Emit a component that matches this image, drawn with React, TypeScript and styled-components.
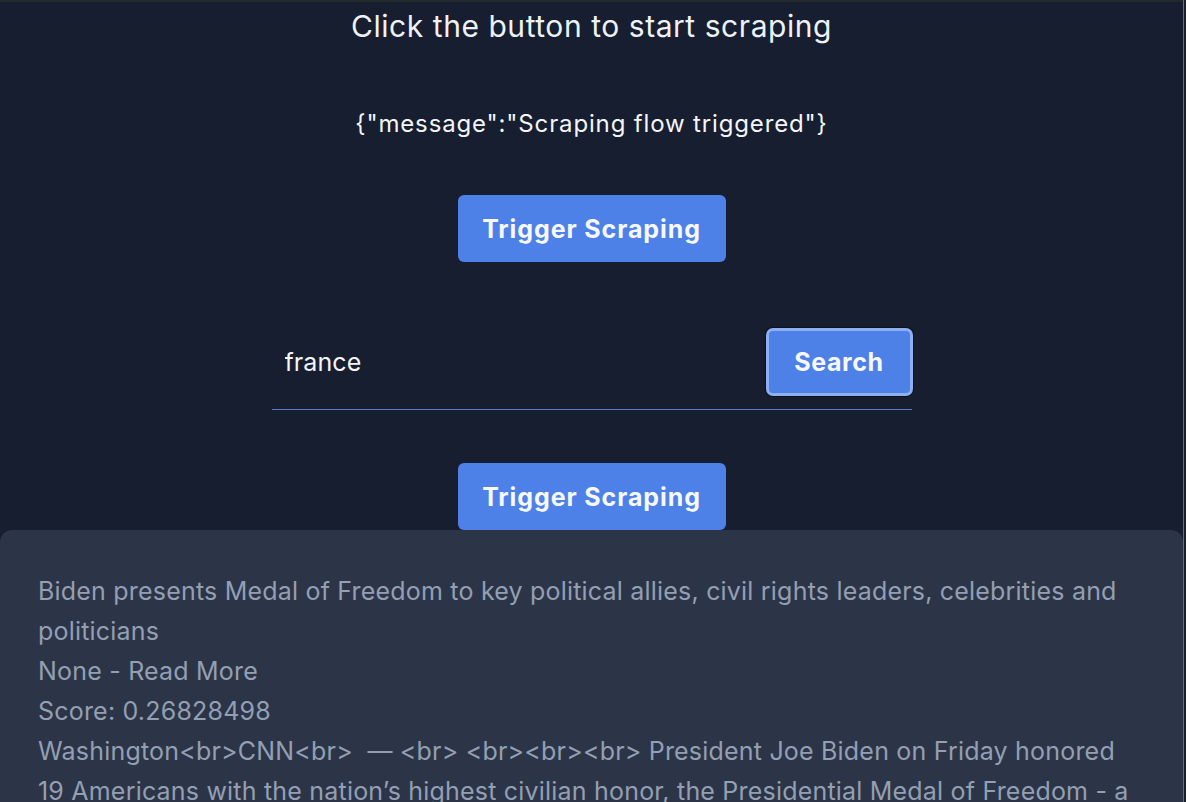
import { useState } from "react";
import styled, { createGlobalStyle } from "styled-components";

const GlobalStyle = createGlobalStyle`
  html, body {
    margin: 0;
    padding: 0;
    background: #161e2f;
    overflow: hidden;
  }
  body {
    font-family: Inter, "Noto Sans", "Liberation Sans", sans-serif;
  }
`;

const Frame = styled.div`
  display: flex;
  width: 1186px;
  height: 802px;
  overflow: hidden;
`;

const Main = styled.main`
  flex: 1;
  display: flex;
  flex-direction: column;
  align-items: center;
  border-top: 2px solid #26292c;
  background: #161e2f;
  min-width: 0;

  & > * {
    flex-shrink: 0;
  }
`;

const EdgeLine = styled.div`
  width: 1px;
  background: #c2426e;
`;

const Gutter = styled.div`
  width: 2px;
  background: #1a1f2a;
`;

const Title = styled.h1`
  margin: 5px 0 0;
  font-size: 30px;
  line-height: 38px;
  font-weight: 400;
  color: #eef2f7;
  letter-spacing: 0.55px;
`;

const Message = styled.p`
  margin: 65px 0 0;
  font-size: 24px;
  line-height: 28px;
  color: #f3f5f8;
  letter-spacing: 0.85px;
`;

const Button = styled.button<{ $gap: number }>`
  margin-top: ${(p) => p.$gap}px;
  width: 268px;
  height: 67px;
  padding: 0;
  border: none;
  border-radius: 6px;
  background: #4d81e8;
  color: #f6f8fc;
  font-family: inherit;
  font-size: 25px;
  font-weight: 700;
  letter-spacing: 0.9px;
  cursor: pointer;
`;

const SearchRow = styled.form`
  margin-top: 66px;
  width: 640px;
  height: 82px;
  padding-bottom: 13px;
  box-sizing: border-box;
  display: flex;
  align-items: center;
  justify-content: space-between;
  border-bottom: 1px solid #5679c4;
`;

const SearchInput = styled.input`
  flex: 1;
  min-width: 0;
  background: transparent;
  border: none;
  outline: none;
  padding: 0 0 0 13px;
  font-family: inherit;
  font-size: 25px;
  letter-spacing: 0.1px;
  color: #f3f5f8;
`;

const SearchButton = styled.button`
  width: 147px;
  height: 68px;
  margin-right: -1px;
  padding: 0;
  border: 3px solid #8cb0f0;
  border-radius: 7px;
  background: #4d81e8;
  box-shadow: 0 0 0 1px #0c1120;
  color: #f6f8fc;
  font-family: inherit;
  font-size: 25px;
  font-weight: 700;
  letter-spacing: 0.6px;
  cursor: pointer;
`;

const ResultCard = styled.section`
  align-self: stretch;
  min-height: 300px;
  background: #2c3547;
  border-radius: 12px 12px 0 0;
  padding: 41px 38px 0;
  color: #939fb3;
  font-size: 25px;
  line-height: 40px;
  letter-spacing: 0.2px;
`;

const Line = styled.div``;

export default function App() {
  const [query, setQuery] = useState("france");

  return (
    <>
      <GlobalStyle />
      <Frame>
        <Main>
          <Title>Click the button to start scraping</Title>
          <Message>{'{"message":"Scraping flow triggered"}'}</Message>
          <Button $gap={57}>Trigger Scraping</Button>
          <SearchRow onSubmit={(e) => e.preventDefault()}>
            <SearchInput value={query} onChange={(e) => setQuery(e.target.value)} />
            <SearchButton type="submit">Search</SearchButton>
          </SearchRow>
          <Button $gap={53}>Trigger Scraping</Button>
          <ResultCard>
            <Line>
              Biden presents Medal of Freedom to key political allies, civil rights leaders, celebrities and
              politicians
            </Line>
            <Line>None - Read More</Line>
            <Line>Score: 0.26828498</Line>
            <Line>
              {
                "Washington<br>CNN<br>\u00a0 — <br> <br><br><br> President Joe Biden on Friday honored 19 Americans with the nation’s highest civilian honor, the Presidential Medal of Freedom - a distinction reserved for those who have made exemplary contributions"
              }
            </Line>
          </ResultCard>
        </Main>
        <EdgeLine />
        <Gutter />
      </Frame>
    </>
  );
}
